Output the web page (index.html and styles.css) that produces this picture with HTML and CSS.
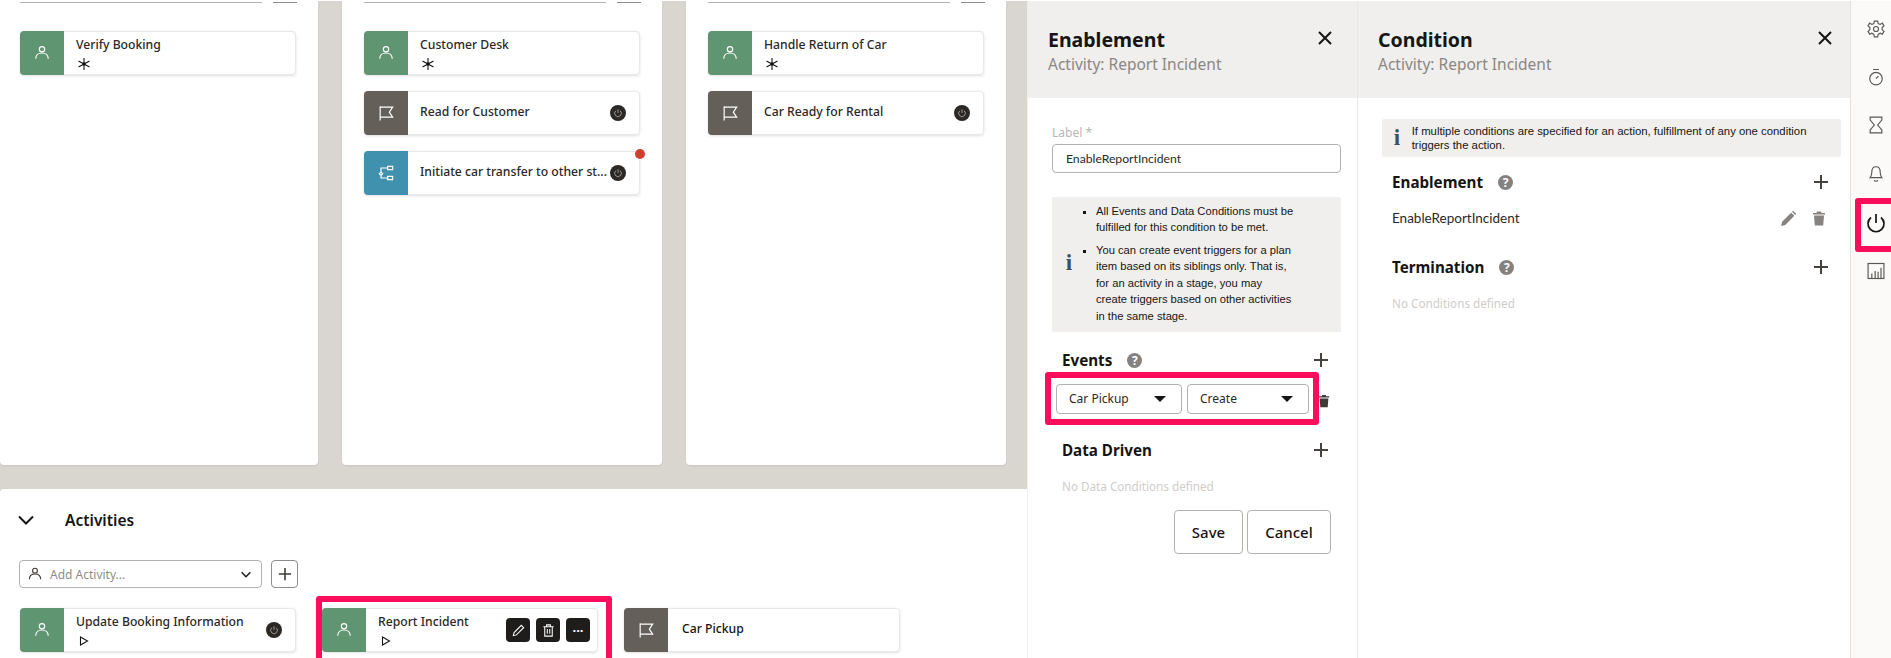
FILE: index.html

```html
<!DOCTYPE html>
<html lang="en">
    <head>
        <meta charset="UTF-8">
        <title>Condition - Report Incident</title>
        <link rel="stylesheet" href="styles.css">
    </head>
    <body>
        <svg class="defs" width="0" height="0">
            <symbol id="person" viewBox="0 0 24 24"><circle cx="12" cy="7.5" r="3.2"/><path d="M4.5 19c0-4.500 3.300-7 7.500-7s7.500 2.500 7.500 7"/></symbol>
            <symbol id="flag" viewBox="0 0 24 24"><path d="M5 21V4M5 5h15l-4 6 4 6H5"/></symbol>
            <symbol id="flow" viewBox="0 0 24 24"><rect x="14" y="4" width="6" height="4"/><path d="M14 6H6v5M6 11l-2 2 2 2 2-2zM6 15v3h8"/><path d="M14 16h6v4h-6z"/></symbol>
            <symbol id="power" viewBox="0 0 24 24"><path d="M12 3v9M7 6.500a8 8 0 1 0 10 0"/></symbol>
            <symbol id="star" viewBox="0 0 14 14"><path d="M7 1v12M1.500 4l11 6M12.500 4l-11 6"/><circle cx="7" cy="7" r="1.800" class="solid"/></symbol>
            <symbol id="play" viewBox="0 0 14 14"><path d="M3.500 3l7 4-7 4z"/></symbol>
            <symbol id="plus" viewBox="0 0 16 16"><path d="M8 1v14M1 8h14"/></symbol>
            <symbol id="close" viewBox="0 0 16 16"><path d="M2 2l12 12M14 2L2 14"/></symbol>
            <symbol id="chevron" viewBox="0 0 16 10"><path d="M1 1.500l7 7 7-7"/></symbol>
            <symbol id="pencil" viewBox="0 0 16 16"><path d="M2.500 13.500l.8-3.300 7.700-7.700 2.500 2.500-7.700 7.700z"/></symbol>
            <symbol id="trash-line" viewBox="0 0 16 16"><path d="M2.500 4h11M6 4V2h4v2M4 4v10h8V4M6.700 6.500v5M9.300 6.500v5"/></symbol>
            <symbol id="trash-solid" viewBox="0 0 16 16"><path class="solid" d="M6 1h4l.5 1.500H14V4H2V2.500h3.500zM3 5h10l-.8 10H3.800z"/></symbol>
            <symbol id="pencil-solid" viewBox="0 0 16 16"><path class="solid" d="M1 15l1-4 8.500-8.500 3 3L5 14zM11.300 1.700l1-1 3 3-1 1z"/></symbol>
            <symbol id="gear" viewBox="0 0 24 24"><circle cx="12" cy="12" r="3"/><path d="M10 2.500h4l.6 3 2.400 1 2.600-1.600 2 3.400-2.300 2 .1 2.600 2.200 2-2 3.400-2.600-1.200-2.400 1.400-.6 3h-4l-.6-3-2.400-1.400-2.600 1.200-2-3.400 2.200-2 .1-2.600-2.300-2 2-3.400 2.600 1.600 2.400-1z"/></symbol>
            <symbol id="timer" viewBox="0 0 24 24"><circle cx="12" cy="14" r="7.500"/><path d="M8.500 3h7M12 14l3-3"/></symbol>
            <symbol id="hourglass" viewBox="0 0 24 24"><path d="M5 2.500h14v3.500l-5 6 5 6v3.500H5V18l5-6-5-6z"/></symbol>
            <symbol id="bell" viewBox="0 0 24 24"><path d="M5 17.500c1.800-2 2-4 2-7 0-3.500 2-6 5-6s5 2.500 5 6c0 3 .2 5 2 7zM9.500 21c1.500 1 3.500 1 5 0"/></symbol>
            <symbol id="bars" viewBox="0 0 24 24"><rect x="2.500" y="3" width="19" height="18"/><path d="M7 21v-6M11 21v-9M14.500 21v-8M18 21V8"/></symbol>
        </svg>

        <div class="page">
            <main class="main">
                <div class="canvas">
                    <section class="stage first">
                        <div class="cut"><span class="cut-select"></span><span class="cut-add"></span></div>
                        <div class="card">
                            <div class="card-icon green"><svg class="ico"><use href="#person"/></svg></div>
                            <div class="card-body">
                                <div class="card-title">Verify Booking</div>
                                <svg class="mark"><use href="#star"/></svg>
                            </div>
                        </div>
                    </section>
                    <section class="stage">
                        <div class="cut"><span class="cut-select"></span><span class="cut-add"></span></div>
                        <div class="card">
                            <div class="card-icon green"><svg class="ico"><use href="#person"/></svg></div>
                            <div class="card-body">
                                <div class="card-title">Customer Desk</div>
                                <svg class="mark"><use href="#star"/></svg>
                            </div>
                        </div>
                        <div class="card">
                            <div class="card-icon brown"><svg class="ico"><use href="#flag"/></svg></div>
                            <div class="card-body"><div class="card-title">Read for Customer</div></div>
                            <span class="badge"><svg><use href="#power"/></svg></span>
                        </div>
                        <div class="card">
                            <div class="card-icon teal"><svg class="ico"><use href="#flow"/></svg></div>
                            <div class="card-body"><div class="card-title clip">Initiate car transfer to other st...</div></div>
                            <span class="badge"><svg><use href="#power"/></svg></span>
                            <span class="dot"></span>
                        </div>
                    </section>
                    <section class="stage">
                        <div class="cut"><span class="cut-select"></span><span class="cut-add"></span></div>
                        <div class="card">
                            <div class="card-icon green"><svg class="ico"><use href="#person"/></svg></div>
                            <div class="card-body">
                                <div class="card-title">Handle Return of Car</div>
                                <svg class="mark"><use href="#star"/></svg>
                            </div>
                        </div>
                        <div class="card">
                            <div class="card-icon brown"><svg class="ico"><use href="#flag"/></svg></div>
                            <div class="card-body"><div class="card-title">Car Ready for Rental</div></div>
                            <span class="badge"><svg><use href="#power"/></svg></span>
                        </div>
                    </section>
                </div>

                <section class="activities">
                    <div class="activities-head">
                        <svg class="chevron"><use href="#chevron"/></svg>
                        <h2>Activities</h2>
                    </div>
                    <div class="add-row">
                        <div class="add-select">
                            <svg class="add-person"><use href="#person"/></svg>
                            <span class="placeholder">Add Activity...</span>
                            <svg class="add-arrow"><use href="#chevron"/></svg>
                        </div>
                        <button class="add-btn"><svg><use href="#plus"/></svg></button>
                    </div>
                    <div class="card-row">
                        <div class="card">
                            <div class="card-icon green"><svg class="ico"><use href="#person"/></svg></div>
                            <div class="card-body">
                                <div class="card-title">Update Booking Information</div>
                                <svg class="mark"><use href="#play"/></svg>
                            </div>
                            <span class="badge"><svg><use href="#power"/></svg></span>
                        </div>
                        <div class="card">
                            <div class="card-icon green"><svg class="ico"><use href="#person"/></svg></div>
                            <div class="card-body">
                                <div class="card-title">Report Incident</div>
                                <svg class="mark"><use href="#play"/></svg>
                            </div>
                            <div class="card-tools">
                                <button><svg><use href="#pencil"/></svg></button>
                                <button><svg><use href="#trash-line"/></svg></button>
                                <button class="dots">&middot;&middot;&middot;</button>
                            </div>
                            <span class="mark-box card-mark"></span>
                        </div>
                        <div class="card">
                            <div class="card-icon brown"><svg class="ico"><use href="#flag"/></svg></div>
                            <div class="card-body"><div class="card-title pickup">Car Pickup</div></div>
                        </div>
                    </div>
                </section>
            </main>

            <aside class="panel enablement">
                <header class="panel-head">
                    <div>
                        <h1>Enablement</h1>
                        <p>Activity: Report Incident</p>
                    </div>
                    <svg class="close"><use href="#close"/></svg>
                </header>
                <div class="panel-body">
                    <label class="field-label" for="label">Label *</label>
                    <input class="field" id="label" type="text" value="EnableReportIncident">
                    <div class="info tall">
                        <span class="info-i">i</span>
                        <ul>
                            <li>All Events and Data Conditions must be fulfilled for this condition to be met.</li>
                            <li>You can create event triggers for a plan item based on its siblings only. That is, for an activity in a stage, you may create triggers based on other activities in the same stage.</li>
                        </ul>
                    </div>
                    <div class="sec-head events-head">
                        <h3>Events</h3>
                        <span class="help">?</span>
                        <svg class="plus"><use href="#plus"/></svg>
                    </div>
                    <div class="event-row">
                        <div class="drop one">Car Pickup<span class="tri"></span></div>
                        <div class="drop two">Create<span class="tri"></span></div>
                        <svg class="event-trash"><use href="#trash-solid"/></svg>
                        <span class="mark-box event-mark"></span>
                    </div>
                    <div class="sec-head driven-head">
                        <h3>Data Driven</h3>
                        <svg class="plus"><use href="#plus"/></svg>
                    </div>
                    <p class="empty">No Data Conditions defined</p>
                    <div class="actions">
                        <button class="btn save">Save</button>
                        <button class="btn cancel">Cancel</button>
                    </div>
                </div>
            </aside>

            <aside class="panel condition">
                <header class="panel-head">
                    <div>
                        <h1>Condition</h1>
                        <p>Activity: Report Incident</p>
                    </div>
                    <svg class="close"><use href="#close"/></svg>
                </header>
                <div class="panel-body">
                    <div class="info short">
                        <span class="info-i">i</span>
                        <p>If multiple conditions are specified for an action, fulfillment of any one condition triggers the action.</p>
                    </div>
                    <div class="sec-head enable-head">
                        <h3>Enablement</h3>
                        <span class="help">?</span>
                        <svg class="plus"><use href="#plus"/></svg>
                    </div>
                    <div class="item">
                        <span>EnableReportIncident</span>
                        <svg class="item-edit"><use href="#pencil-solid"/></svg>
                        <svg class="item-trash"><use href="#trash-solid"/></svg>
                    </div>
                    <div class="sec-head term-head">
                        <h3>Termination</h3>
                        <span class="help">?</span>
                        <svg class="plus"><use href="#plus"/></svg>
                    </div>
                    <p class="empty">No Conditions defined</p>
                </div>
            </aside>

            <nav class="rail">
                <svg><use href="#gear"/></svg>
                <svg><use href="#timer"/></svg>
                <svg><use href="#hourglass"/></svg>
                <svg><use href="#bell"/></svg>
                <div class="rail-power">
                    <svg><use href="#power"/></svg>
                    <span class="mark-box rail-mark"></span>
                </div>
                <svg><use href="#bars"/></svg>
            </nav>
        </div>
    </body>
</html>
```

FILE: styles.css

```css
* {
    box-sizing: border-box;
}
html, body {
    margin: 0;
    height: 658px;
    overflow: hidden;
}
body {
    font-family: "Noto Sans", sans-serif;
    color: #161513;
    background-color: white;
}
h1, h2, h3, p, ul {
    margin: 0;
    padding: 0;
}
button {
    font-family: inherit;
    padding: 0;
}
svg {
    fill: none;
    stroke: currentColor;
    stroke-width: 1.5;
}
.solid {
    fill: currentColor;
    stroke: none;
}
.defs {
    position: absolute;
}
.page {
    display: flex;
    height: 657px;
    margin-top: 1px;
}

/* left side */
.main {
    width: 1028px;
    flex: none;
    background-color: #d9d6d0;
    display: flex;
    flex-direction: column;
    border-right: 1px solid #eeeeec;
}
.canvas {
    display: grid;
    grid-template-columns: 318px 320px 320px;
    gap: 24px;
    height: 464px;
    flex: none;
}
.stage {
    background-color: white;
    padding: 1px 22px 0;
    border-radius: 0 0 4px 4px;
    box-shadow: 0 1px 2px rgba(0,0,0,0.08);
}
.stage.first {
    padding-left: 20px;
}
.cut {
    display: flex;
    gap: 11px;
    height: 1px;
    margin-bottom: 28px;
    width: 277px;
}
.cut-select {
    width: 242px;
    background-color: #b3b1ad;
}
.cut-add {
    flex: 1;
    background-color: #8e8c88;
}
.card {
    position: relative;
    display: flex;
    align-items: stretch;
    width: 276px;
    height: 44px;
    margin-bottom: 16px;
    background-color: white;
    border-radius: 4px;
    border: 1px solid #ebe9e6;
    box-shadow: 0 1px 3px rgba(0,0,0,0.12);
}
.card-icon {
    width: 44px;
    flex: none;
    margin: -1px 0 -1px -1px;
    border-radius: 4px 0 0 4px;
    color: white;
    display: flex;
    align-items: center;
    justify-content: center;
}
.green { background-color: #5f9570; }
.brown { background-color: #655f5a; }
.teal { background-color: #3f91ae; }
.ico {
    width: 20px;
    height: 20px;
    stroke-width: 1.4;
}
.card-body {
    flex: 1;
    min-width: 0;
    padding-left: 12px;
    display: flex;
    flex-direction: column;
    justify-content: center;
}
.card-title {
    font-size: 12.2px;
    font-weight: 500;
    line-height: 16px;
    white-space: nowrap;
    color: #2b2926;
    margin-top: -2px;
}
.mark {
    width: 14px;
    height: 14px;
    margin: 4px 0 -4px 1px;
    stroke-width: 1.1;
}
.pickup {
    color: #161513;
    margin-left: 2px;
}
.badge {
    position: absolute;
    right: 13px;
    top: 13px;
    width: 16px;
    height: 16px;
    border-radius: 50%;
    background-color: #2b2826;
    color: #c9c7c4;
    display: flex;
    align-items: center;
    justify-content: center;
}
.badge svg {
    width: 10px;
    height: 10px;
    stroke-width: 1.6;
}
.dot {
    position: absolute;
    right: -6px;
    top: -3px;
    width: 10px;
    height: 10px;
    border-radius: 50%;
    background-color: #cf3f2c;
}
.activities {
    flex: 1;
    min-height: 0;
    background-color: white;
    border-radius: 4px 0 0 0;
    margin-top: 24px;
    padding: 19px 20px 0;
}
.activities-head {
    display: flex;
    align-items: center;
    height: 24px;
}
.chevron {
    width: 16px;
    height: 10px;
    margin-left: -2px;
    stroke-width: 2;
}
.activities-head h2 {
    font-size: 15.5px;
    font-weight: 600;
    margin-left: 31px;
}
.add-row {
    display: flex;
    gap: 9px;
    margin: 28px 0 20px -1px;
}
.add-select {
    width: 243px;
    height: 28px;
    border: 1px solid #b3b1ad;
    border-radius: 4px;
    display: flex;
    align-items: center;
    padding: 0 10px 0 6px;
}
.add-person {
    width: 18px;
    height: 18px;
    color: #3d3a37;
}
.placeholder {
    flex: 1;
    font-size: 12px;
    color: #8f8c88;
    margin-left: 6px;
}
.add-arrow {
    width: 10px;
    height: 7px;
    stroke-width: 2.2;
}
.add-btn {
    width: 27px;
    height: 28px;
    background-color: white;
    border: 1px solid #8e8c88;
    border-radius: 4px;
    color: #3d3a37;
    display: flex;
    align-items: center;
    justify-content: center;
}
.add-btn svg {
    width: 14px;
    height: 14px;
    stroke-width: 1.8;
}
.card-row {
    display: flex;
    gap: 26px;
}
.card-tools {
    position: absolute;
    right: 7px;
    top: 9px;
    display: flex;
    gap: 6px;
}
.card-tools button {
    width: 24px;
    height: 24px;
    background-color: #1f1d1b;
    border: none;
    border-radius: 4px;
    color: white;
    display: flex;
    align-items: center;
    justify-content: center;
}
.card-tools svg {
    width: 15px;
    height: 15px;
    stroke-width: 1.1;
}
.card-tools .dots {
    font-size: 13px;
    font-weight: 700;
    line-height: 1;
}

/* red highlights drawn over the screen */
.mark-box {
    position: absolute;
    border: 6px solid #fa0e5c;
    border-radius: 3px;
}
.card-mark {
    left: -7px;
    top: -13px;
    width: 296px;
    height: 80px;
}
.event-mark {
    left: -11px;
    top: -12px;
    width: 274px;
    height: 53px;
}
.rail-mark {
    left: -11px;
    top: -15px;
    width: 42px;
    height: 54px;
}

/* side panels */
.panel {
    flex: none;
    background-color: white;
}
.enablement {
    width: 330px;
    border-right: 1px solid #e9e8e6;
}
.condition {
    width: 492px;
}
.panel-head {
    height: 97px;
    background-color: #f0efed;
    display: flex;
    justify-content: space-between;
    padding: 25px 20px 0;
}
.condition .panel-head {
    padding-right: 13px;
}
.panel-head h1 {
    font-size: 19.5px;
    font-weight: 700;
    line-height: 28px;
}
.panel-head p {
    font-size: 15.5px;
    line-height: 20px;
    color: #8a8784;
}
.close {
    width: 16px;
    height: 16px;
    margin: 4px 4px 0 0;
    stroke-width: 2;
}
.enablement .panel-body {
    padding: 27px 16px 0 24px;
}
.condition .panel-body {
    padding: 21px 9px 0 24px;
}
.field-label {
    display: block;
    font-size: 12px;
    line-height: 16px;
    color: #b8b6b3;
}
.field {
    display: block;
    width: 289px;
    height: 29px;
    margin-top: 3px;
    padding: 0 13px;
    border: 1px solid #b3b1ad;
    border-radius: 4px;
    font-family: "Lato", sans-serif;
    font-size: 12.2px;
    color: #2b2926;
}
.info {
    background-color: #f0efed;
    border-radius: 2px;
    display: flex;
    align-items: center;
    font-family: "Liberation Sans", sans-serif;
    color: #161513;
}
.info-i {
    font-family: "Liberation Serif", serif;
    font-weight: 700;
    font-size: 23px;
    color: #3e4f63;
    text-align: center;
}
.tall {
    height: 135px;
    margin-top: 24px;
    padding-bottom: 2px;
    font-size: 11.2px;
    line-height: 16.5px;
}
.tall .info-i {
    width: 34px;
}
.tall ul {
    list-style: square;
    width: 198px;
    margin-left: 10px;
}
.tall li + li {
    margin-top: 6px;
}
.short {
    height: 38px;
    width: 459px;
    font-size: 11.35px;
    line-height: 14px;
}
.short .info-i {
    width: 34px;
}
.sec-head {
    display: flex;
    align-items: center;
    height: 24px;
    margin-left: 10px;
    padding-right: 12px;
}
.sec-head h3 {
    font-size: 15.2px;
    font-weight: 700;
}
.help {
    width: 15px;
    height: 15px;
    border-radius: 50%;
    margin-left: 15px;
    background-color: #85827f;
    color: white;
    font-size: 12px;
    font-weight: 700;
    line-height: 15px;
    text-align: center;
}
.plus {
    width: 16px;
    height: 16px;
    margin-left: auto;
    color: #46423f;
    stroke-width: 2;
}
.events-head {
    margin-top: 16px;
}
.event-row {
    position: relative;
    display: flex;
    align-items: center;
    gap: 5px;
    margin: 12px 0 0 4px;
}
.drop {
    position: relative;
    height: 30px;
    border: 1px solid #b3b1ad;
    border-radius: 4px;
    font-size: 12px;
    line-height: 28px;
    padding-left: 12px;
    color: #2b2926;
}
.one {
    width: 126px;
}
.two {
    width: 122px;
}
.tri {
    position: absolute;
    right: 15px;
    top: 11px;
    border-style: solid;
    border-width: 6px 6px 0;
    border-color: #161513 transparent transparent;
}
.event-trash {
    width: 14px;
    height: 16px;
    margin: 4px 0 0 3px;
    color: #3d3a37;
}
.driven-head {
    margin-top: 24px;
}
.empty {
    margin: 16px 0 0 10px;
    font-size: 11.7px;
    line-height: 16px;
    color: #cfcdca;
}
.actions {
    display: flex;
    justify-content: flex-end;
    gap: 4px;
    margin: 16px 10px 0 0;
}
.btn {
    height: 44px;
    background-color: white;
    border: 1px solid #b3b1ad;
    border-radius: 4px;
    font-size: 15px;
    font-weight: 500;
    color: #161513;
}
.save {
    width: 69px;
}
.cancel {
    width: 84px;
}
.enable-head {
    margin-top: 13px;
}
.term-head {
    margin-top: 25px;
}
.item {
    display: flex;
    align-items: center;
    height: 24px;
    margin: 12px 0 0 10px;
    font-family: "Lato", sans-serif;
    font-size: 13.5px;
    color: #2b2926;
}
.item span {
    flex: 1;
}
.item-edit {
    width: 17px;
    height: 17px;
    color: #85827f;
}
.item-trash {
    width: 16px;
    height: 17px;
    margin: 0 14px 0 14px;
    color: #85827f;
}

/* right icon rail */
.rail {
    flex: 1;
    background-color: #fbfaf9;
    border-left: 1px solid #e4e2df;
    display: flex;
    flex-direction: column;
    align-items: center;
    gap: 28px;
    padding: 18px 0 0 10px;
    color: #5a5753;
}
.rail svg {
    width: 20px;
    height: 20px;
    flex: none;
    stroke-width: 1.4;
}
.rail-power {
    position: relative;
    width: 20px;
    height: 20px;
    margin-top: 2px;
    color: #161513;
}
.rail-power svg {
    display: block;
    width: 24px;
    height: 24px;
    margin: -2px;
    stroke-width: 1.7;
}
```
